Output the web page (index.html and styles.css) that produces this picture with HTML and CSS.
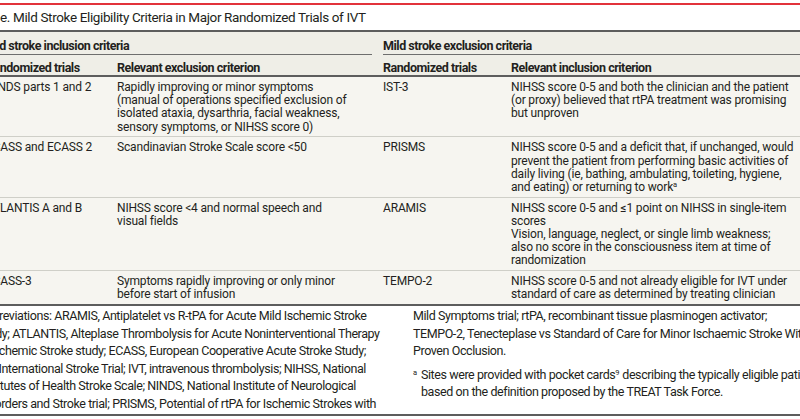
FILE: index.html
```html
<!DOCTYPE html>
<html lang="en">
<head>
<meta charset="utf-8">
<title>Mild Stroke Eligibility Criteria</title>
<link rel="stylesheet" href="styles.css">
</head>
<body>
<div class="page">
  <div class="rule"></div>
  <h1 class="title">Table. Mild Stroke Eligibility Criteria in Major Randomized Trials of IVT</h1>
  <table class="trials">
    <colgroup><col class="c1"><col class="c2"><col class="c3"><col class="c4"></colgroup>
    <thead>
      <tr class="group">
        <th colspan="2" class="g-left"><span>Mild stroke inclusion criteria</span></th>
        <th colspan="2" class="g-right"><span>Mild stroke exclusion criteria</span></th>
      </tr>
      <tr class="sub">
        <th class="first">Randomized trials</th>
        <th>Relevant exclusion criterion</th>
        <th>Randomized trials</th>
        <th>Relevant inclusion criterion</th>
      </tr>
    </thead>
    <tbody>
      <tr>
        <td class="first">NINDS parts 1 and 2</td>
        <td>Rapidly improving or minor symptoms<br>(manual of operations specified exclusion of<br>isolated ataxia, dysarthria, facial weakness,<br>sensory symptoms, or NIHSS score 0)</td>
        <td>IST-3</td>
        <td>NIHSS score 0-5 and both the clinician and the patient<br>(or proxy) believed that rtPA treatment was promising<br>but unproven</td>
      </tr>
      <tr>
        <td class="first">ECASS and ECASS 2</td>
        <td>Scandinavian Stroke Scale score &lt;50</td>
        <td>PRISMS</td>
        <td>NIHSS score 0-5 and a deficit that, if unchanged, would<br>prevent the patient from performing basic activities of<br>daily living (ie, bathing, ambulating, toileting, hygiene,<br>and eating) or returning to work<sup>a</sup></td>
      </tr>
      <tr>
        <td class="first">ATLANTIS A and B</td>
        <td>NIHSS score &lt;4 and normal speech and<br>visual fields</td>
        <td>ARAMIS</td>
        <td>NIHSS score 0-5 and ≤1 point on NIHSS in single-item<br>scores<br>Vision, language, neglect, or single limb weakness;<br>also no score in the consciousness item at time of<br>randomization</td>
      </tr>
      <tr>
        <td class="first">ECASS-3</td>
        <td>Symptoms rapidly improving or only minor<br>before start of infusion</td>
        <td>TEMPO-2</td>
        <td>NIHSS score 0-5 and not already eligible for IVT under<br>standard of care as determined by treating clinician</td>
      </tr>
    </tbody>
  </table>
  <div class="notes">
    <p class="note">Abbreviations: ARAMIS, Antiplatelet vs R-tPA for Acute Mild Ischemic Stroke<br>Study; ATLANTIS, Alteplase Thrombolysis for Acute Noninterventional Therapy<br>in Ischemic Stroke study; ECASS, European Cooperative Acute Stroke Study;<br>IST, International Stroke Trial; IVT, intravenous thrombolysis; NIHSS, National<br>Institutes of Health Stroke Scale; NINDS, National Institute of Neurological<br>Disorders and Stroke trial; PRISMS, Potential of rtPA for Ischemic Strokes with</p>
    <div class="note-col">
      <p class="note">Mild Symptoms trial; rtPA, recombinant tissue plasminogen activator;<br>TEMPO-2, Tenecteplase vs Standard of Care for Minor Ischaemic Stroke With<br>Proven Occlusion.</p>
      <p class="note foot"><sup class="mark">a</sup>Sites were provided with pocket cards<sup>9</sup> describing the typically eligible patient<br>based on the definition proposed by the TREAT Task Force.</p>
    </div>
  </div>
</div>
</body>
</html>
```

FILE: styles.css
```css
html, body {
  margin: 0;
  padding: 0;
  background: #ffffff;
}
body {
  width: 800px;
  height: 419px;
  overflow: hidden;
  font-family: Roboto, "Liberation Sans", sans-serif;
  color: #231f20;
}
.page {
  margin-left: -24px;
  width: 880px;
  padding-top: 3px;
}
.rule {
  height: 2px;
  background: #e2333b;
  margin-left: 24px;
  width: 800px;
}
.title {
  margin: 0;
  padding: 3px 0 0 0;
  height: 22px;
  font-size: 13.5px;
  line-height: 18px;
  letter-spacing: -0.37px;
  font-weight: normal;
  color: #231f20;
}
.trials {
  border-collapse: collapse;
  table-layout: fixed;
  width: 858px;
  font-size: 12px;
  letter-spacing: -0.17px;
}
.c1 { width: 134px; }
.c2 { width: 266px; }
.c3 { width: 128px; }
.c4 { width: 330px; }
.trials thead {
  background: #efeee7;
  border-top: 2px solid #5d5d5d;
  border-bottom: 2px solid #5d5d5d;
}
.trials th {
  text-align: left;
  font-size: 12.5px;
  font-weight: bold;
  letter-spacing: -0.47px;
  white-space: nowrap;
  padding: 0 0 0 7px;
}
.group th {
  padding-top: 5px;
}
.group th span {
  display: block;
  line-height: 17px;
  border-bottom: 1px solid #6e6e6e;
}
.g-left {
  padding-right: 4px !important;
}
.sub th {
  padding-top: 5px;
  padding-bottom: 0;
  line-height: 15px;
}
.trials .first {
  padding-left: 10px;
}
.trials td {
  vertical-align: top;
  white-space: nowrap;
  padding: 4px 0 2.5px 7px;
  line-height: 13.2px;
  background: #f6f5f0;
  border-top: 1px solid #cfcfc8;
}
.trials tbody tr:first-child td {
  border-top: 0;
}
.trials tbody {
  border-bottom: 2px solid #5d5d5d;
}
sup {
  font-size: 7.5px;
  line-height: 0;
  vertical-align: 4px;
  letter-spacing: 0;
}
.notes {
  display: grid;
  grid-template-columns: 400px 400px;
  column-gap: 35px;
  padding: 1px 0 1px 2px;
  border-bottom: 2px solid #5d5d5d;
  width: 858px;
  box-sizing: border-box;
}
.note {
  margin: 0;
  font-size: 12.5px;
  letter-spacing: -0.42px;
  line-height: 17.6px;
  white-space: nowrap;
  color: #231f20;
}
.foot {
  margin-top: 6px;
  padding-left: 8px;
  text-indent: -8px;
}
.mark {
  display: inline-block;
  width: 8px;
  text-indent: 0;
}
```
